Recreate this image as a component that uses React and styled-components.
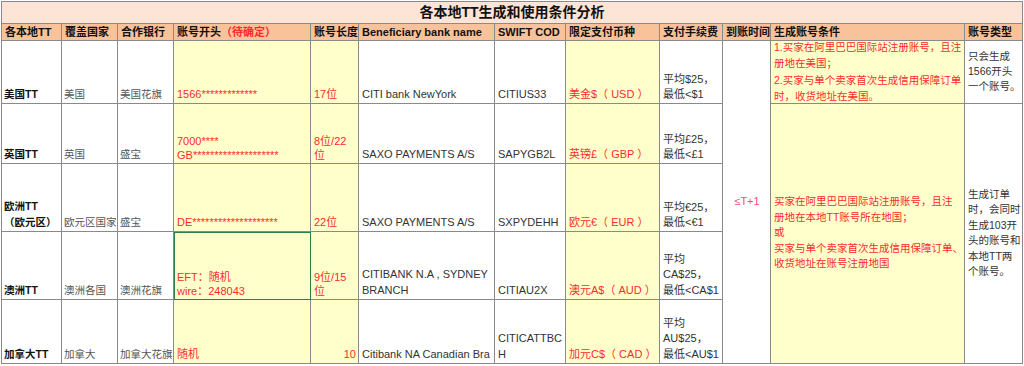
import React from 'react';
import styled, { createGlobalStyle } from 'styled-components';

const YELLOW = '#ffffcc';
const RED = '#ff2b2b';
const GRAY = '#555';

const GlobalStyle = createGlobalStyle`
  body {
    margin: 0;
    background: #fff;
  }
`;

const Sheet = styled.table`
  margin: 1px 0 0 1px;
  border-collapse: collapse;
  table-layout: fixed;
  width: 1021px;
  font-family: "Liberation Sans", "Noto Sans CJK SC", sans-serif;
  font-size: 11px;
  color: #333;
`;

const Row = styled.tr`
  height: ${(p) => p.$h}px;
`;

const Cell = styled.td`
  border: 1px solid #8a8a8a;
  padding: 0 2px 1px ${(p) => (p.$tight ? 2 : 3)}px;
  background: ${(p) => p.$bg || '#fff'};
  color: ${(p) => p.$color || '#333'};
  text-align: ${(p) => p.$align || 'left'};
  vertical-align: ${(p) => p.$valign || 'bottom'};
  font-weight: ${(p) => (p.$bold ? 700 : 400)};
  font-size: ${(p) => p.$size || 11}px;
  line-height: ${(p) => p.$lh || 15}px;
  white-space: nowrap;
  overflow: hidden;
  outline: ${(p) => (p.$selected ? '1.5px solid #2e7d4f' : 'none')};
  outline-offset: -1px;
`;

// first column: the TT name, bold
const NameCell = styled(Cell).attrs({ $tight: true, $size: 10.5 })`
  color: #111;
  font-weight: 700;
`;

// country / bank columns: grey Chinese text
const InfoCell = styled(Cell).attrs({ $tight: true, $size: 10.5 })`
  color: ${GRAY};
`;

const TitleCell = styled(Cell)`
  background: #fce4d6;
  color: #111;
  font-weight: 700;
  font-size: 14px;
  text-align: center;
  vertical-align: middle;
  padding: 0;
`;

const HeadCell = styled(Cell)`
  background: #f8c29b;
  color: #111;
  font-weight: 700;
  vertical-align: middle;
  line-height: 16px;
  padding: 0 2px 0 3px;
`;

const Red = styled.span`
  color: ${RED};
`;

// keeps tall text centred without growing the row
const Fit = styled.div`
  height: ${(p) => p.$h}px;
  display: flex;
  flex-direction: column;
  justify-content: center;
  overflow: visible;
`;

const widths = [60, 56, 56, 137, 48, 136, 71, 94, 63, 48, 194, 58];

export default function App() {
  return (
    <>
      <GlobalStyle />
      <Sheet>
        <colgroup>
          {widths.map((w, i) => (
            <col key={i} style={{ width: w }} />
          ))}
        </colgroup>
        <tbody>
          <Row $h={22}>
            <TitleCell colSpan={12}>各本地TT生成和使用条件分析</TitleCell>
          </Row>
          <Row $h={17}>
            <HeadCell>各本地TT</HeadCell>
            <HeadCell>覆盖国家</HeadCell>
            <HeadCell>合作银行</HeadCell>
            <HeadCell>
              账号开头<Red>（待确定）</Red>
            </HeadCell>
            <HeadCell>账号长度</HeadCell>
            <HeadCell>Beneficiary bank name</HeadCell>
            <HeadCell>SWIFT COD</HeadCell>
            <HeadCell>限定支付币种</HeadCell>
            <HeadCell>支付手续费</HeadCell>
            <HeadCell>到账时间</HeadCell>
            <HeadCell>生成账号条件</HeadCell>
            <HeadCell>账号类型</HeadCell>
          </Row>

          <Row $h={63}>
            <NameCell>美国TT</NameCell>
            <InfoCell>美国</InfoCell>
            <InfoCell>美国花旗</InfoCell>
            <Cell $bg={YELLOW} $color={RED}>1566*************</Cell>
            <Cell $bg={YELLOW} $color={RED}>17位</Cell>
            <Cell>CITI bank NewYork</Cell>
            <Cell>CITIUS33</Cell>
            <Cell $bg={YELLOW} $color={RED}>美金$（ USD ）</Cell>
            <Cell>
              平均$25，
              <br />
              最低&lt;$1
            </Cell>
            <Cell rowSpan={5} $valign="middle" $align="center" $color="#f4506e">
              ≤T+1
            </Cell>
            <Cell $bg={YELLOW} $color={RED} $size={10.5} $valign="middle" $lh={16.5}>
              <Fit $h={61}>
                <div>
                  1.买家在阿里巴巴国际站注册账号，且注
                  <br />
                  册地在美国；
                  <br />
                  2.买家与单个卖家首次生成信用保障订单
                  <br />
                  时，收货地址在美国。
                </div>
              </Fit>
            </Cell>
            <Cell $valign="middle" $size={10.5}>
              只会生成
              <br />
              1566开头
              <br />
              一个账号。
            </Cell>
          </Row>

          <Row $h={60}>
            <NameCell>英国TT</NameCell>
            <InfoCell>英国</InfoCell>
            <InfoCell>盛宝</InfoCell>
            <Cell $bg={YELLOW} $color={RED} $lh={13.5}>
              7000****
              <br />
              GB********************
            </Cell>
            <Cell $bg={YELLOW} $color={RED} $lh={14}>
              8位/22
              <br />位
            </Cell>
            <Cell>SAXO PAYMENTS A/S</Cell>
            <Cell>SAPYGB2L</Cell>
            <Cell $bg={YELLOW} $color={RED}>英镑£（ GBP ）</Cell>
            <Cell>
              平均£25，
              <br />
              最低&lt;£1
            </Cell>
            <Cell rowSpan={4} $bg={YELLOW} $color={RED} $size={10.5} $valign="middle" $lh={15.5}>
              买家在阿里巴巴国际站注册账号，且注
              <br />
              册地在本地TT账号所在地国；
              <br />或
              <br />
              买家与单个卖家首次生成信用保障订单、
              <br />
              收货地址在账号注册地国
            </Cell>
            <Cell rowSpan={4} $valign="middle" $lh={15.5} $size={10.5}>
              生成订单
              <br />
              时，会同时
              <br />
              生成103开
              <br />
              头的账号和
              <br />
              本地TT两
              <br />
              个账号。
            </Cell>
          </Row>

          <Row $h={68}>
            <NameCell $lh={16}>
              欧洲TT
              <br />
              （欧元区）
            </NameCell>
            <InfoCell>欧元区国家</InfoCell>
            <InfoCell>盛宝</InfoCell>
            <Cell $bg={YELLOW} $color={RED}>DE********************</Cell>
            <Cell $bg={YELLOW} $color={RED}>22位</Cell>
            <Cell>SAXO PAYMENTS A/S</Cell>
            <Cell>SXPYDEHH</Cell>
            <Cell $bg={YELLOW} $color={RED}>欧元€（ EUR ）</Cell>
            <Cell>
              平均€25，
              <br />
              最低&lt;€1
            </Cell>
          </Row>

          <Row $h={68}>
            <NameCell>澳洲TT</NameCell>
            <InfoCell>澳洲各国</InfoCell>
            <InfoCell>澳洲花旗</InfoCell>
            <Cell $bg={YELLOW} $color={RED} $lh={14} $selected>
              EFT：随机
              <br />
              wire：248043
            </Cell>
            <Cell $bg={YELLOW} $color={RED} $lh={14}>
              9位/15
              <br />位
            </Cell>
            <Cell $lh={16}>
              CITIBANK N.A , SYDNEY
              <br />
              BRANCH
            </Cell>
            <Cell>CITIAU2X</Cell>
            <Cell $bg={YELLOW} $color={RED}>澳元A$（ AUD ）</Cell>
            <Cell $lh={15.5}>
              平均
              <br />
              CA$25，
              <br />
              最低&lt;CA$1
            </Cell>
          </Row>

          <Row $h={64}>
            <NameCell>加拿大TT</NameCell>
            <InfoCell>加拿大</InfoCell>
            <InfoCell>加拿大花旗</InfoCell>
            <Cell $bg={YELLOW} $color={RED}>随机</Cell>
            <Cell $bg={YELLOW} $color={RED} $align="right">10</Cell>
            <Cell>Citibank NA Canadian Bra</Cell>
            <Cell $lh={16}>
              CITICATTBC
              <br />H
            </Cell>
            <Cell $bg={YELLOW} $color={RED}>加元C$（ CAD ）</Cell>
            <Cell $lh={15.5}>
              平均
              <br />
              AU$25，
              <br />
              最低&lt;AU$1
            </Cell>
          </Row>
        </tbody>
      </Sheet>
    </>
  );
}
